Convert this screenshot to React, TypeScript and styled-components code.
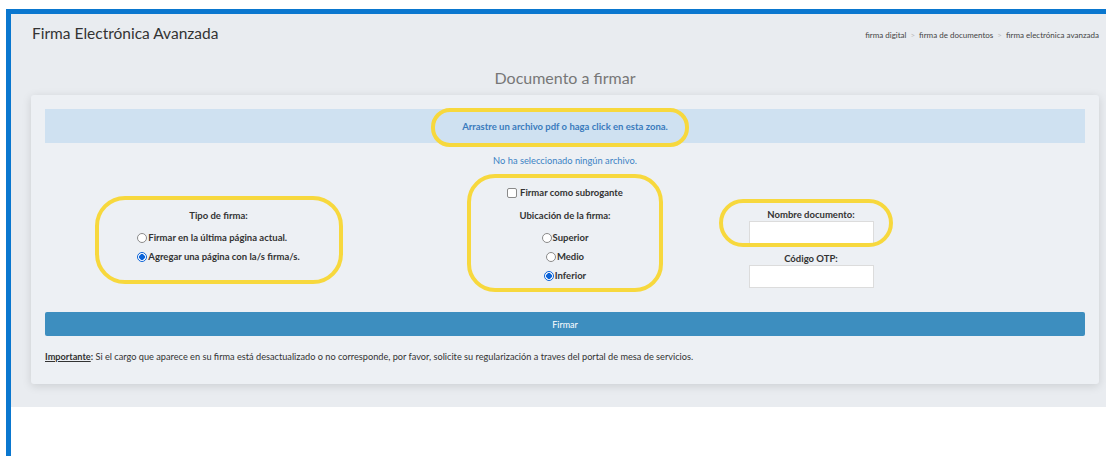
import React from 'react';
import styled, { createGlobalStyle } from 'styled-components';

const GlobalStyle = createGlobalStyle`
  html, body {
    margin: 0;
    padding: 0;
    background: #fff;
    height: 456px;
    overflow: hidden;
  }
  body {
    font-family: Lato, "Open Sans", "Liberation Sans", sans-serif;
    color: #333;
  }
`;

const Frame = styled.div`
  margin: 9px 0 0 6px;
  border-top: 5px solid #0a77cf;
  border-left: 5px solid #0a77cf;
  height: calc(456px - 14px);
`;

const Section = styled.section`
  background: #e9ecf0;
  padding: 0 7px 23px 20px;
`;

const Header = styled.div`
  display: flex;
  align-items: center;
  justify-content: space-between;
  padding: 9px 0 0 1px;
`;

const PageTitle = styled.h1`
  margin: 0;
  font-size: 15.5px;
  line-height: 20px;
  font-weight: 400;
  color: #333;
`;

const Breadcrumb = styled.ol`
  display: flex;
  list-style: none;
  margin: 4px 0 0;
  padding: 0;
  font-size: 8px;
  line-height: 12px;
  color: #444;
`;

const Crumb = styled.li`
  & + &::before {
    content: '>';
    color: #bbb;
    padding: 0 4px;
  }
`;

const SubTitle = styled.h2`
  margin: 25px 0 7px;
  text-align: center;
  font-size: 16px;
  line-height: 20px;
  font-weight: 400;
  color: #777;
`;

const Card = styled.div`
  background: #edf0f4;
  border-radius: 3px;
  box-shadow: 0 2px 10px rgba(0, 0, 0, 0.13);
  padding: 14px 14px 20px;
`;

const DropZone = styled.div`
  height: 34px;
  background: #cfe1f1;
  display: flex;
  align-items: center;
  justify-content: center;
  font-size: 9.5px;
  font-weight: 700;
  color: #3a7bbd;
  cursor: pointer;
`;

const FileStatus = styled.div`
  margin-top: 12px;
  text-align: center;
  font-size: 9.3px;
  line-height: 12px;
  color: #3b82c4;
`;

const Options = styled.div`
  margin-top: 19px;
  display: grid;
  grid-template-columns: 347px 346px 1fr;
  align-items: start;
`;

const Column = styled.div<{ $offset?: number }>`
  display: flex;
  flex-direction: column;
  align-items: center;
  padding-top: ${(p) => p.$offset ?? 0}px;
`;

const FieldColumn = styled.div`
  width: 146px;
  display: flex;
  flex-direction: column;
  align-items: center;
  padding-top: 23px;
`;

const Marked = styled.div`
  position: relative;
  display: inline-flex;
  flex-direction: column;
  align-items: center;
`;

const Highlight = styled.span<{ $t: number; $r: number; $b: number; $l: number; $radius: number }>`
  position: absolute;
  top: ${(p) => p.$t}px;
  right: ${(p) => p.$r}px;
  bottom: ${(p) => p.$b}px;
  left: ${(p) => p.$l}px;
  border: 4px solid #f7d83d;
  border-radius: ${(p) => p.$radius}px;
  pointer-events: none;
`;

const GroupTitle = styled.div<{ $gap?: number }>`
  font-size: 9.5px;
  font-weight: 700;
  line-height: 14px;
  color: #333;
  margin-top: ${(p) => p.$gap ?? 0}px;
`;

const Choice = styled.label<{ $gap: number }>`
  display: flex;
  align-items: center;
  gap: 1px;
  margin-top: ${(p) => p.$gap}px;
  font-size: 9.5px;
  font-weight: 700;
  line-height: 14px;
  color: #333;
`;

const Radio = styled.input.attrs({ type: 'radio' })`
  appearance: none;
  margin: 0;
  width: 10px;
  height: 10px;
  border: 1px solid #8a8a8a;
  border-radius: 50%;
  background: #fff;
  box-sizing: border-box;
  &:checked {
    border-color: #0b63d8;
    background: radial-gradient(circle, #0b63d8 0 2.6px, #fff 3.1px);
  }
`;

const Checkbox = styled.input.attrs({ type: 'checkbox' })`
  appearance: none;
  margin: 0 2px 0 0;
  width: 10px;
  height: 10px;
  border: 1px solid #8a8a8a;
  border-radius: 2px;
  background: #fff;
  box-sizing: border-box;
`;

const FieldLabel = styled.div<{ $gap?: number }>`
  font-size: 9.5px;
  font-weight: 700;
  line-height: 12px;
  color: #333;
  margin-top: ${(p) => p.$gap ?? 0}px;
`;

const TextInput = styled.input`
  width: 125px;
  height: 23px;
  box-sizing: border-box;
  border: 1px solid #dcdcdc;
  background: #fff;
  outline: none;
`;

const SubmitButton = styled.button`
  display: block;
  width: 100%;
  height: 24px;
  margin-top: 24px;
  border: none;
  border-radius: 2px;
  background: #3d8ebf;
  color: #fff;
  font-family: inherit;
  font-size: 9px;
  cursor: pointer;
`;

const Notice = styled.p`
  margin: 14px 0 0;
  font-size: 9.2px;
  line-height: 14px;
  color: #333;
  u {
    font-weight: 700;
  }
`;

export default function App() {
  return (
    <>
      <GlobalStyle />
      <Frame>
        <Section>
          <Header>
            <PageTitle>Firma Electrónica Avanzada</PageTitle>
            <Breadcrumb>
              <Crumb>firma digital</Crumb>
              <Crumb>firma de documentos</Crumb>
              <Crumb>firma electrónica avanzada</Crumb>
            </Breadcrumb>
          </Header>

          <SubTitle>Documento a firmar</SubTitle>

          <Card>
            <DropZone>
              <Marked>
                Arrastre un archivo pdf o haga click en esta zona.
                <Highlight $t={-13} $r={-21} $b={-15} $l={-31} $radius={19} />
              </Marked>
            </DropZone>
            <FileStatus>No ha seleccionado ningún archivo.</FileStatus>

            <Options>
              <Column $offset={23}>
                <Marked>
                  <GroupTitle>Tipo de firma:</GroupTitle>
                  <div>
                    <Choice $gap={8}>
                      <Radio name="tipo" />
                      Firmar en la última página actual.
                    </Choice>
                    <Choice $gap={5}>
                      <Radio name="tipo" defaultChecked />
                      Agregar una página con la/s firma/s.
                    </Choice>
                  </div>
                  <Highlight $t={-13} $r={-43} $b={-20} $l={-42} $radius={30} />
                </Marked>
              </Column>

              <Column>
                <Marked>
                  <Choice $gap={0}>
                    <Checkbox />
                    Firmar como subrogante
                  </Choice>
                  <GroupTitle $gap={9}>Ubicación de la firma:</GroupTitle>
                  <Choice $gap={8}>
                    <Radio name="ubicacion" />
                    Superior
                  </Choice>
                  <Choice $gap={5}>
                    <Radio name="ubicacion" />
                    Medio
                  </Choice>
                  <Choice $gap={5}>
                    <Radio name="ubicacion" defaultChecked />
                    Inferior
                  </Choice>
                  <Highlight $t={-12} $r={-40} $b={-9} $l={-40} $radius={28} />
                </Marked>
              </Column>

              <FieldColumn>
                <Marked>
                  <FieldLabel>Nombre documento:</FieldLabel>
                  <TextInput />
                  <Highlight $t={-10} $r={-19} $b={-3} $l={-30} $radius={26} />
                </Marked>
                <FieldLabel $gap={9}>Código OTP:</FieldLabel>
                <TextInput />
              </FieldColumn>
            </Options>

            <SubmitButton>Firmar</SubmitButton>

            <Notice>
              <u>Importante</u>
              <b>:</b> Si el cargo que aparece en su firma está desactualizado o no corresponde, por favor,
              solicite su regularización a traves del portal de mesa de servicios.
            </Notice>
          </Card>
        </Section>
      </Frame>
    </>
  );
}
